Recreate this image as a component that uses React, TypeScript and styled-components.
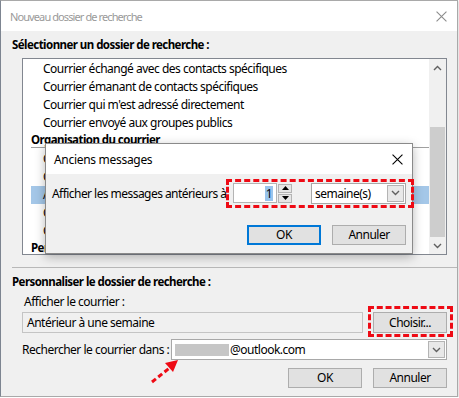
import React from 'react';
import styled, { createGlobalStyle } from 'styled-components';

const Global = createGlobalStyle`
  html, body { margin: 0; padding: 0; background: #ffffff; }
  body {
    font-family: "Segoe UI", "Noto Sans", "Open Sans", sans-serif;
    font-size: 12px;
    letter-spacing: -0.5px;
    color: #000;
  }
  * { box-sizing: border-box; }
`;

const Window = styled.div`
  position: relative;
  width: 458px;
  height: 397px;
  background: #f0f0f0;
  border: 1px solid #a9a9a9;
  border-left-color: #7d8591;
  display: flex;
  flex-direction: column;
  overflow: hidden;
  box-shadow: 1px 1px 2px rgba(0, 0, 0, 0.15);
`;

const TitleBar = styled.div<{ $active?: boolean }>`
  height: 30px;
  flex: none;
  background: #ffffff;
  display: flex;
  align-items: center;
  justify-content: space-between;
  padding: 0 ${(p) => (p.$active ? 9 : 10)}px 0 ${(p) => (p.$active ? 8 : 9)}px;
  color: ${(p) => (p.$active ? '#000' : '#9a9a9a')};
  font-size: ${(p) => (p.$active ? 12 : 11)}px;
  letter-spacing: ${(p) => (p.$active ? -0.3 : -0.9)}px;
  white-space: nowrap;
`;

const Content = styled.div`
  padding: 0 10px 0 11px;
  display: flex;
  flex-direction: column;
`;

const SectionLabel = styled.div<{ $mt: number }>`
  font-weight: bold;
  font-size: 11.5px;
  letter-spacing: -0.55px;
  line-height: 16px;
  white-space: nowrap;
  margin-top: ${(p) => p.$mt}px;
`;

const ListBox = styled.div`
  margin: 5px 0 0 10px;
  height: 197px;
  flex: none;
  background: #fff;
  border: 1px solid #828790;
  display: flex;
  overflow: hidden;
`;

const ListItems = styled.div`
  flex: 1;
  padding-top: 1px;
  display: flex;
  flex-direction: column;
  padding-left: 8px;
`;

const Item = styled.div<{ $selected?: boolean }>`
  height: 18px;
  line-height: 18px;
  flex: none;
  padding-left: 12px;
  white-space: nowrap;
  background: ${(p) => (p.$selected ? '#a4c7e8' : 'transparent')};
`;

const GroupHeader = styled.div`
  flex: none;
  height: 16px;
  font-weight: bold;
  font-size: 11.5px;
  letter-spacing: -0.55px;
  line-height: 15px;
  white-space: nowrap;
  border-bottom: 1px solid #a0a0a0;
  margin-bottom: 2px;
`;

const ScrollBar = styled.div`
  width: 17px;
  flex: none;
  background: #f0f0f0;
  display: flex;
  flex-direction: column;
`;

const ScrollArrow = styled.div`
  height: 17px;
  display: flex;
  align-items: center;
  justify-content: center;
  flex: none;
`;

const ScrollTrack = styled.div`
  flex: 1;
  display: flex;
  flex-direction: column;
  padding: 0 1px;
`;

const ScrollThumb = styled.div`
  background: #cdcdcd;
  height: 110px;
  margin-top: 51px;
`;

const Separator = styled.div`
  margin: 12px -10px 0 0;
  height: 1px;
  flex: none;
  background: #b8b8b8;
`;

const SubLabel = styled.div<{ $mt: number; $ml: number }>`
  line-height: 16px;
  white-space: nowrap;
  margin-top: ${(p) => p.$mt}px;
  margin-left: ${(p) => p.$ml}px;
`;

const FieldRow = styled.div<{ $mt: number }>`
  display: flex;
  align-items: center;
  margin-top: ${(p) => p.$mt}px;
  margin-left: 10px;
  gap: 10px;
`;

const ReadOnlyField = styled.div`
  width: 341px;
  height: 21px;
  border: 1px solid #c4c4c4;
  background: #f0f0f0;
  padding-left: 4px;
  line-height: 19px;
  white-space: nowrap;
`;

const Button = styled.div<{ $default?: boolean; $h?: number }>`
  width: 74px;
  height: ${(p) => p.$h ?? 21}px;
  flex: none;
  background: #e1e1e1;
  border: ${(p) => (p.$default ? '2px solid #0078d7' : '1px solid #adadad')};
  display: flex;
  align-items: center;
  justify-content: center;
  padding-bottom: 1px;
  white-space: nowrap;
`;

const SearchRow = styled.div`
  display: flex;
  align-items: center;
  margin-top: 6px;
  margin-left: 10px;
  justify-content: space-between;
  white-space: nowrap;
`;

const Combo = styled.div<{ $w: number; $bg: string }>`
  width: ${(p) => p.$w}px;
  height: 21px;
  flex: none;
  background: ${(p) => p.$bg};
  border: 1px solid #a8a8a8;
  display: flex;
  align-items: center;
  padding: 0 1px 0 3px;
`;

const ComboText = styled.div`
  flex: 1;
  display: flex;
  align-items: center;
  white-space: nowrap;
`;

const Redacted = styled.span`
  display: inline-block;
  width: 54px;
  height: 12px;
  background: #c6c6c6;
  margin-right: 1px;
`;

const DropButton = styled.div`
  width: 17px;
  height: 17px;
  flex: none;
  background: #e8e8e8;
  border: 1px solid #b4b4b4;
  display: flex;
  align-items: center;
  justify-content: center;
`;

const ButtonRow = styled.div<{ $mt: number }>`
  display: flex;
  justify-content: flex-end;
  gap: 11px;
  margin-top: ${(p) => p.$mt}px;
`;

const Popup = styled.div`
  position: absolute;
  left: 44px;
  top: 142px;
  width: 368px;
  height: 111px;
  background: #f0f0f0;
  border: 1px solid #8a8a8a;
  box-shadow: 0 3px 10px rgba(0, 0, 0, 0.28);
  display: flex;
  flex-direction: column;
`;

const PopupBody = styled.div`
  padding: 9px 6px 0 6px;
  display: flex;
  flex-direction: column;
`;

const PopupRow = styled.div`
  display: flex;
  align-items: center;
  justify-content: space-between;
  height: 20px;
  white-space: nowrap;
  letter-spacing: -0.55px;
`;

const Controls = styled.div`
  display: flex;
  align-items: center;
  gap: 19px;
  flex: none;
  letter-spacing: -0.5px;
`;

const SpinGroup = styled.div`
  display: flex;
  align-items: center;
  gap: 1px;
`;

const SpinInput = styled.div`
  width: 44px;
  height: 20px;
  background: #fff;
  border: 1px solid #b4b4b4;
  display: flex;
  justify-content: flex-end;
  align-items: center;
  padding-right: 3px;
`;

const Selection = styled.span`
  background: #99c4ec;
  padding: 0 1px;
  line-height: 15px;
`;

const SpinButtons = styled.div`
  display: flex;
  flex-direction: column;
  gap: 1px;
`;

const SpinButton = styled.div`
  width: 14px;
  height: 9px;
  background: #e6e6e6;
  border: 1px solid #b4b4b4;
  display: flex;
  align-items: center;
  justify-content: center;
`;

const Highlight = styled.div<{ $l: number; $t: number; $w: number; $h: number }>`
  position: absolute;
  left: ${(p) => p.$l}px;
  top: ${(p) => p.$t}px;
  width: ${(p) => p.$w}px;
  height: ${(p) => p.$h}px;
  border: 3px dashed #ee0a14;
  pointer-events: none;
`;

const ArrowSvg = styled.svg`
  position: absolute;
  left: 140px;
  top: 350px;
  overflow: visible;
`;

const CloseX = ({ color, size = 10 }: { color: string; size?: number }) => (
  <svg width={size} height={size} viewBox="0 0 10 10">
    <path d="M0.5 0.5 L9.5 9.5 M9.5 0.5 L0.5 9.5" stroke={color} strokeWidth="1" fill="none" />
  </svg>
);

const Chevron = ({ up = false, color = '#606060' }: { up?: boolean; color?: string }) => (
  <svg width="9" height="6" viewBox="0 0 9 6">
    <path d={up ? 'M1 5 L4.5 1.5 L8 5' : 'M1 1 L4.5 4.5 L8 1'} stroke={color} strokeWidth="1.4" fill="none" />
  </svg>
);

const Tri = ({ up = false }: { up?: boolean }) => (
  <svg width="7" height="4" viewBox="0 0 7 4">
    <path d={up ? 'M0 4 L3.5 0 L7 4 Z' : 'M0 0 L3.5 4 L7 0 Z'} fill="#000" />
  </svg>
);

export default function App() {
  return (
    <>
      <Global />
      <Window>
        <TitleBar>
          <span>Nouveau dossier de recherche</span>
          <CloseX color="#8c8c8c" size={11} />
        </TitleBar>
        <Content>
          <SectionLabel $mt={6}>Sélectionner un dossier de recherche :</SectionLabel>
          <ListBox>
            <ListItems>
              <Item>Courrier échangé avec des contacts spécifiques</Item>
              <Item>Courrier émanant de contacts spécifiques</Item>
              <Item>Courrier qui m'est adressé directement</Item>
              <Item>Courrier envoyé aux groupes publics</Item>
              <GroupHeader>Organisation du courrier</GroupHeader>
              <Item>Courrier non lu</Item>
              <Item>Courrier avec indicateur de suivi</Item>
              <Item $selected>Anciens messages</Item>
              <Item>Courrier avec pièces jointes</Item>
              <Item>Courrier catégorisé</Item>
              <GroupHeader>Personnes</GroupHeader>
            </ListItems>
            <ScrollBar>
              <ScrollArrow>
                <Chevron up />
              </ScrollArrow>
              <ScrollTrack>
                <ScrollThumb />
              </ScrollTrack>
              <ScrollArrow>
                <Chevron />
              </ScrollArrow>
            </ScrollBar>
          </ListBox>
          <Separator />
          <SectionLabel $mt={6}>Personnaliser le dossier de recherche :</SectionLabel>
          <SubLabel $mt={4} $ml={12}>Afficher le courrier :</SubLabel>
          <FieldRow $mt={2}>
            <ReadOnlyField>Antérieur à une semaine</ReadOnlyField>
            <Button>Choisir...</Button>
          </FieldRow>
          <SearchRow>
            <span>Rechercher le courrier dans :</span>
            <Combo $w={276} $bg="#ffffff">
              <ComboText>
                <Redacted />
                @outlook.com
              </ComboText>
              <DropButton>
                <Chevron />
              </DropButton>
            </Combo>
          </SearchRow>
          <ButtonRow $mt={8}>
            <Button $h={20}>OK</Button>
            <Button $h={20}>Annuler</Button>
          </ButtonRow>
        </Content>

        <Popup>
          <TitleBar $active>
            <span>Anciens messages</span>
            <CloseX color="#000" size={11} />
          </TitleBar>
          <PopupBody>
            <PopupRow>
              <span>Afficher les messages antérieurs à</span>
              <Controls>
                <SpinGroup>
                  <SpinInput>
                    <Selection>1</Selection>
                  </SpinInput>
                  <SpinButtons>
                    <SpinButton>
                      <Tri up />
                    </SpinButton>
                    <SpinButton>
                      <Tri />
                    </SpinButton>
                  </SpinButtons>
                </SpinGroup>
                <Combo $w={95} $bg="#ffffff">
                  <ComboText>semaine(s)</ComboText>
                  <DropButton>
                    <Chevron />
                  </DropButton>
                </Combo>
              </Controls>
            </PopupRow>
            <ButtonRow $mt={22}>
              <Button $default $h={20}>OK</Button>
              <Button $h={20}>Annuler</Button>
            </ButtonRow>
          </PopupBody>
        </Popup>

        <Highlight $l={225} $t={178} $w={188} $h={29} />
        <Highlight $l={367} $t={305} $w={85} $h={31} />
        <ArrowSvg width="40" height="36">
          <path d="M11 31 L31 15" stroke="#ee0a14" strokeWidth="3" strokeDasharray="5 3" fill="none" />
          <path d="M37 9 L24 12 L32 21 Z" fill="#ee0a14" />
        </ArrowSvg>
      </Window>
    </>
  );
}
